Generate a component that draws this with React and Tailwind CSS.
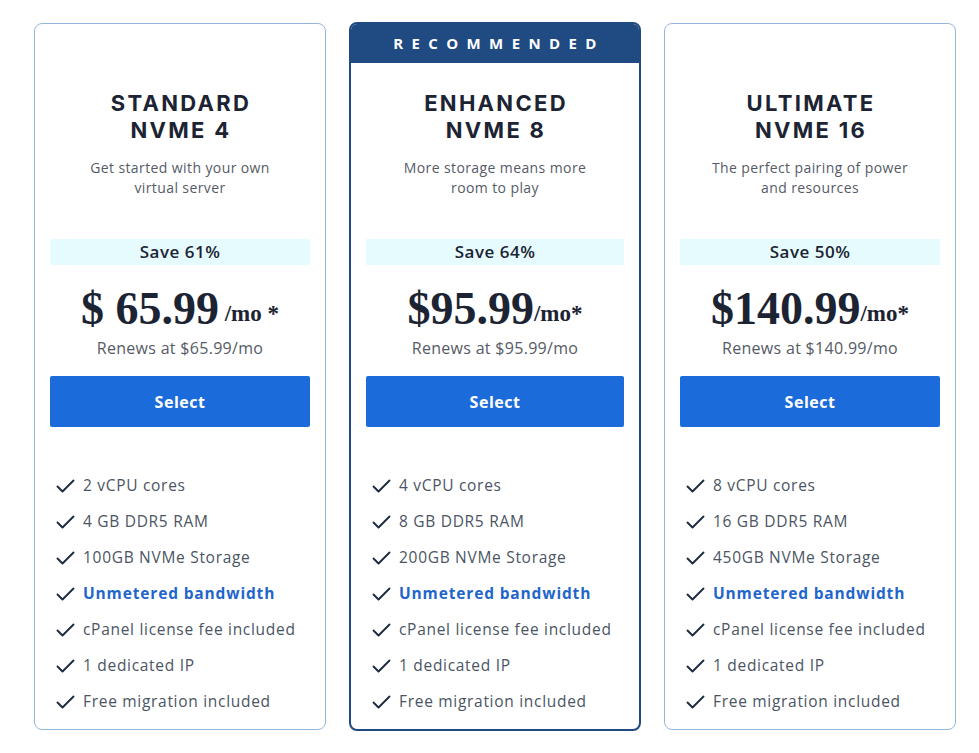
import React from "react";

const plans = [
  {
    name: ["STANDARD", "NVME 4"],
    blurb: ["Get started with your own", "virtual server"],
    save: "Save 61%",
    price: "$ 65.99",
    per: " /mo *",
    renew: "Renews at $65.99/mo",
    features: ["2 vCPU cores", "4 GB DDR5 RAM", "100GB NVMe Storage"],
  },
  {
    name: ["ENHANCED", "NVME 8"],
    blurb: ["More storage means more", "room to play"],
    save: "Save 64%",
    price: "$95.99",
    per: "/mo*",
    renew: "Renews at $95.99/mo",
    features: ["4 vCPU cores", "8 GB DDR5 RAM", "200GB NVMe Storage"],
    recommended: true,
  },
  {
    name: ["ULTIMATE", "NVME 16"],
    blurb: ["The perfect pairing of power", "and resources"],
    save: "Save 50%",
    price: "$140.99",
    per: "/mo*",
    renew: "Renews at $140.99/mo",
    features: ["8 vCPU cores", "16 GB DDR5 RAM", "450GB NVMe Storage"],
  },
];

function Check() {
  return (
    <svg width="19" height="14" viewBox="0 0 19 14" className="shrink-0">
      <path d="M1.5 7.5 L6.5 12.5 L17.5 1.5" fill="none" stroke="#1c2b3f" strokeWidth="1.9" strokeLinecap="round" strokeLinejoin="round" />
    </svg>
  );
}

function Feature({ children, bold }) {
  return (
    <li className="flex items-center h-[36px] gap-[8px] pl-[6px]">
      <Check />
      <span className={bold ? "font-bold text-[#1f66cc] tracking-[0.85px]" : "text-[#4b5563] tracking-[0.7px]"}>
        {children}
      </span>
    </li>
  );
}

function PlanCard({ plan }) {
  const rec = plan.recommended;
  return (
    <div
      className={
        "w-[292px] rounded-[8px] bg-white flex flex-col overflow-hidden " +
        (rec ? "h-[709px] border-2 border-[#1f4a82]" : "h-[707px] border border-[#93b8de] mt-px")
      }
    >
      {rec ? (
        <div className="h-[39px] bg-[#1f4a82] flex items-center justify-center text-white text-[15px] font-bold tracking-[8.4px] pl-[8px]">
          RECOMMENDED
        </div>
      ) : (
        <div className="h-[40px]" />
      )}
      <div className={"px-[15px] flex flex-col " + (rec ? "pt-[27px]" : "pt-[26px]")}>
        <h2
          className="flex flex-col items-center text-[22px] font-bold tracking-[2.3px] pl-[2px] text-[#1c2433]"
          style={{ fontFamily: "Inter, \"Open Sans\", sans-serif" }}
        >
          <span className="h-[27px] leading-[27px]">{plan.name[0]}</span>
          <span className="h-[27px] leading-[27px]">{plan.name[1]}</span>
        </h2>
        <p className="mt-[14px] text-center text-[14px] leading-[20px] tracking-[0.4px] text-[#555b66]">
          {plan.blurb[0]}
          <br />
          {plan.blurb[1]}
        </p>
        <div className="mt-[41px] h-[26px] bg-[#e6fbfd] flex items-center justify-center text-[17px] font-semibold tracking-[0.5px] text-[#1c2433]">
          {plan.save}
        </div>
        <div
          className="mt-[21px] h-[48px] flex items-end justify-center text-[#1c2433] font-bold"
          style={{ fontFamily: '"Liberation Serif", "Times New Roman", serif' }}
        >
          <span className="text-[46px] leading-[50px]">{plan.price}</span>
          <span className="text-[23px] leading-[40px] whitespace-pre">{plan.per}</span>
        </div>
        <p className="mt-[3px] text-center text-[16px] leading-[22px] tracking-[0.3px] text-[#555b66]">{plan.renew}</p>
        <button className="mt-[17px] h-[51px] rounded-[2px] bg-[#1c6bdb] text-white text-[16px] font-bold tracking-[0.5px]">
          Select
        </button>
        <ul className="mt-[41px] text-[15.5px]">
          {plan.features.map((f) => (
            <Feature key={f}>{f}</Feature>
          ))}
          <Feature bold>Unmetered bandwidth</Feature>
          <Feature>cPanel license fee included</Feature>
          <Feature>1 dedicated IP</Feature>
          <Feature>Free migration included</Feature>
        </ul>
      </div>
    </div>
  );
}

export default function App() {
  return (
    <div
      className="w-[979px] h-[753px] bg-white pl-[34px] pt-[22px] flex items-start gap-[23px]"
      style={{ fontFamily: '"Open Sans", "Noto Sans", sans-serif' }}
    >
      {plans.map((p) => (
        <PlanCard key={p.name[0]} plan={p} />
      ))}
    </div>
  );
}
